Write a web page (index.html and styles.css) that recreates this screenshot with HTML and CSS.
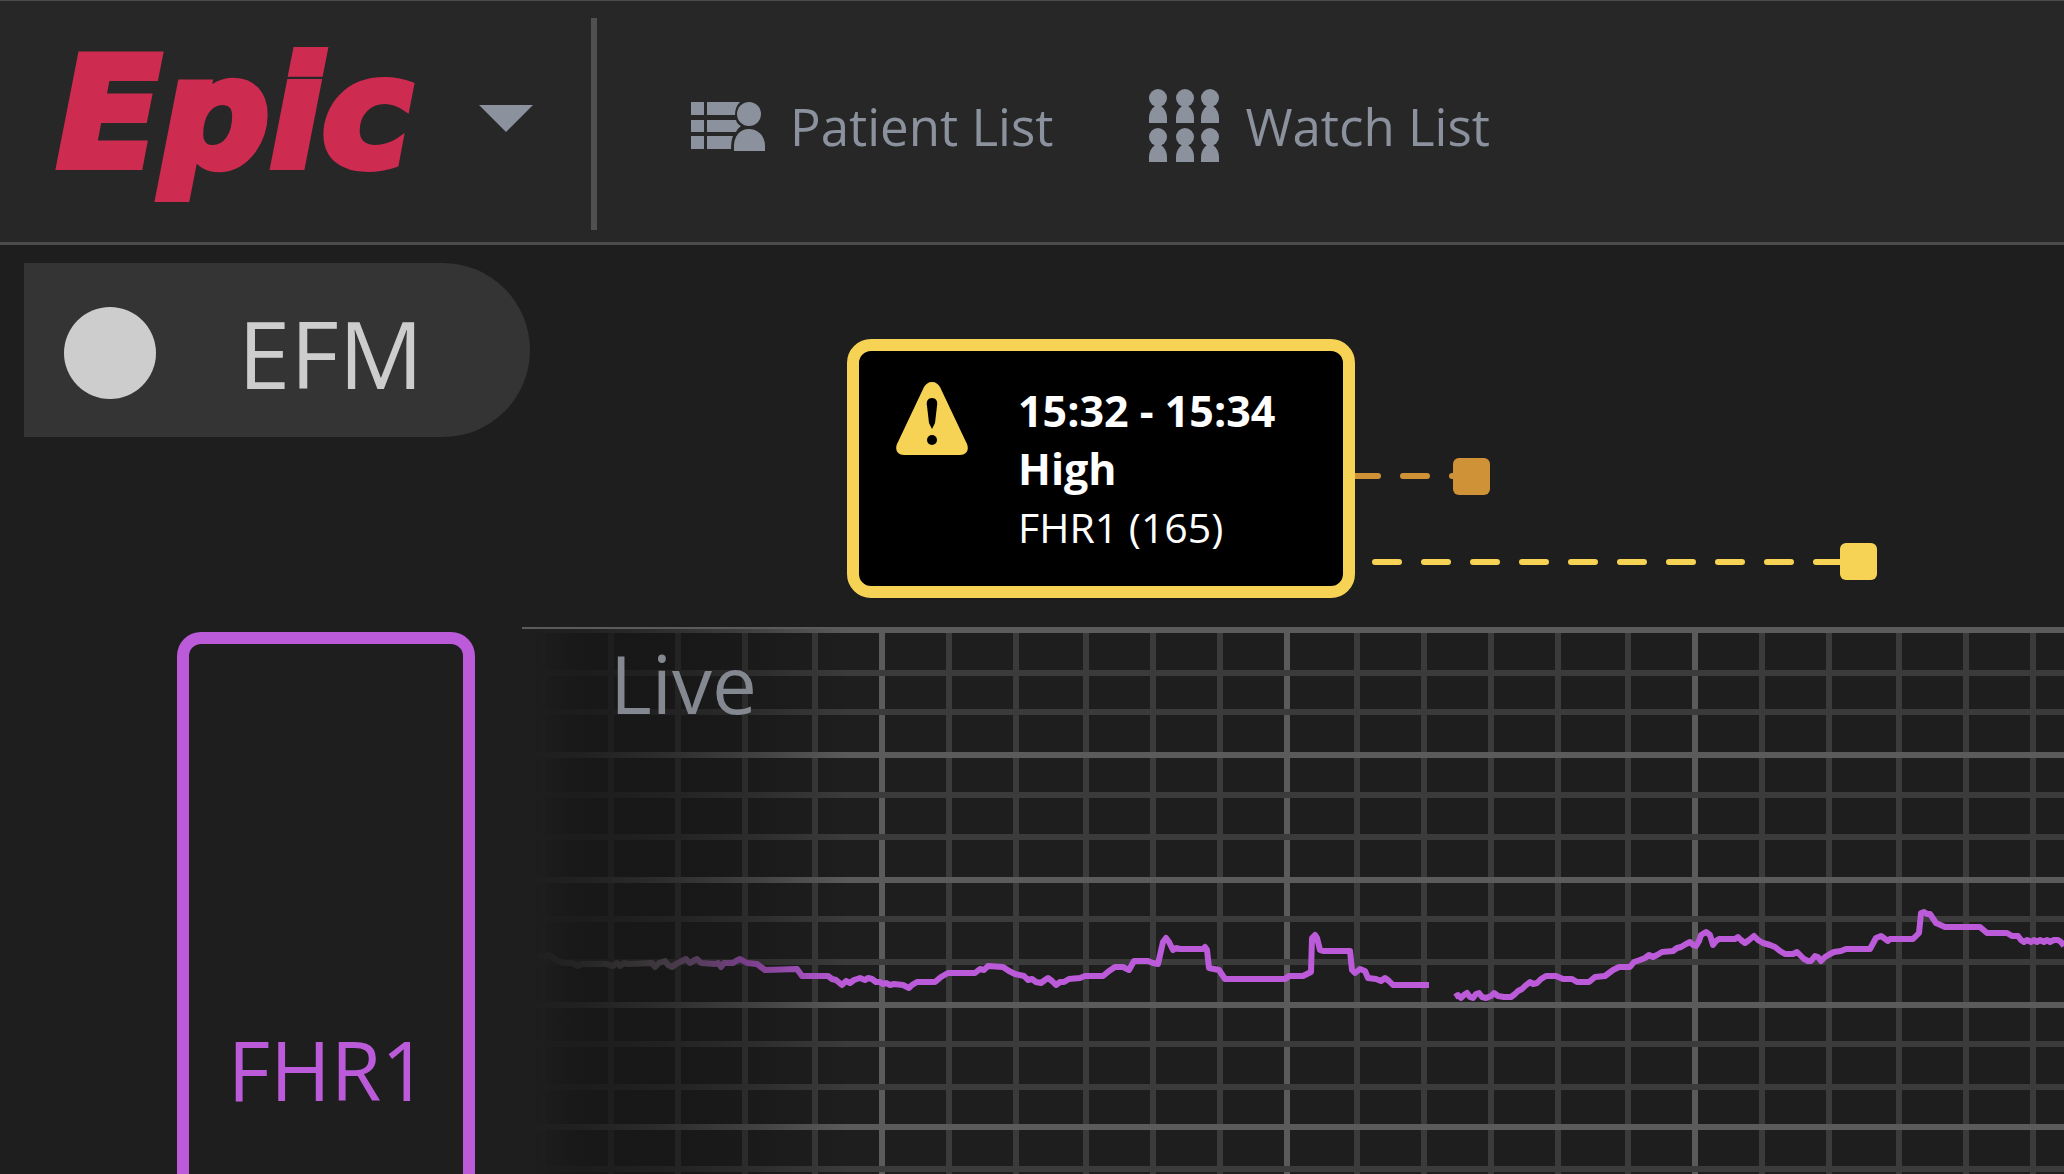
FILE: index.html
```html
<!DOCTYPE html>
<html lang="en">
	<head>
		<meta charset="utf-8" />
		<meta name="viewport" content="width=device-width, initial-scale=1">
		<title>EFM</title>
		<link rel="stylesheet" href="styles.css">
	</head>
	<body>

		<header class="navbar">
			<button class="brand" type="button">
				<svg class="logo" width="400" height="170" viewBox="0 0 400 170" role="img" aria-label="Epic">
					<text x="7" y="127">Epic</text>
				</svg>
				<svg class="caret" width="54" height="27" viewBox="0 0 54 27"><path d="M0 0h54L27 27z" /></svg>
			</button>
			<nav class="menu">
				<a class="menu-item" href="#">
					<svg class="menu-icon" width="74" height="78" viewBox="0 5 74 78">
						<path d="M0 20h13v13H0zM0 38h13v12H0zM0 54h13v13H0z" />
						<path d="M16 20h33q-5 5-5 13H16zM16 38h29q1 4 5 6-3 2-5 6H16zM16 54h26q-2 5-2 13H16z" />
						<ellipse cx="58" cy="32" rx="12" ry="12" />
						<path d="M43 69V64C43 54 49 47 58 47s16 7 16 17v5z" />
					</svg>
					<span>Patient List</span>
				</a>
				<a class="menu-item" href="#">
					<svg class="menu-icon" width="71" height="78" viewBox="0 0 71 78">
						<defs>
							<g id="person">
								<circle cx="9" cy="9" r="9" />
								<path d="M6 17h6c4 3 6 7 6 12v5H0v-5c0-5 2-9 6-12z" />
							</g>
						</defs>
						<use href="#person" x="0" y="2" />
						<use href="#person" x="27" y="2" />
						<use href="#person" x="52" y="2" />
						<use href="#person" x="0" y="41" />
						<use href="#person" x="27" y="41" />
						<use href="#person" x="52" y="41" />
					</svg>
					<span>Watch List</span>
				</a>
			</nav>
		</header>

		<main class="monitor">
			<div class="side">
				<button class="efm" type="button"><i class="efm-dot"></i>EFM</button>
			</div>

			<section class="events">
				<div class="alert">
					<svg class="alert-icon" width="74" height="74" viewBox="0 0 74 74">
						<path class="sign" d="M37 0c4 0 6 2 8 5l26 55c4 7 1 13-6 13H9c-7 0-10-6-6-13L29 5c2-3 4-5 8-5z" />
						<path d="M37 16c4 0 6 3 5 8l-2 17-3 6-3-6-2-17c-1-5 1-8 5-8z" />
						<circle cx="37" cy="58" r="5" />
					</svg>
					<div class="alert-text">
						<strong>15:32 - 15:34</strong>
						<strong>High</strong>
						<span>FHR1 (165)</span>
					</div>
				</div>
				<!-- event durations -->
				<svg class="tracks" width="600" height="259" viewBox="0 0 600 259">
					<path class="track orange" d="M-4 137h27M48 137h24M97 137h6" />
					<rect class="orange" x="98" y="119" width="37" height="37" rx="6" />
					<path class="track yellow" d="M20 223h468" stroke-dasharray="24 25" />
					<rect class="yellow" x="485" y="204" width="37" height="37" rx="6" />
				</svg>
			</section>

			<div class="side">
				<button class="channel" type="button">FHR1</button>
			</div>

			<section class="chart">
				<svg class="strip" width="1542" height="547" viewBox="522 627 1542 547">
					<defs>
						<linearGradient id="trace" gradientUnits="userSpaceOnUse" x1="522" y1="0" x2="800" y2="0">
							<stop offset="0" stop-color="#777" />
							<stop offset="0.45" stop-color="#8c8088" />
							<stop offset="0.8" stop-color="#bc5bd9" />
						</linearGradient>
					</defs>
					<path class="minor" d="M543 627v547M611 627v547M678 627v547M745 627v547M815 627v547M949 627v547M1016 627v547M1086 627v547M1153 627v547M1220 627v547M1357 627v547M1424 627v547M1491 627v547M1558 627v547M1628 627v547M1762 627v547M1829 627v547M1899 627v547M1966 627v547M2033 627v547" />
					<path class="major" d="M882 627v547M1287 627v547M1695 627v547" />
					<path class="minor" d="M522 673h1542M522 712h1542M522 795h1542M522 837h1542M522 919h1542M522 962h1542M522 1044h1542M522 1087h1542M522 1169h1542" />
					<path class="major" d="M522 630h1542M522 755h1542M522 880h1542M522 1005h1542M522 1127h1542" />

					<polyline class="fhr" points="537,954 544,957 548,955 552,957 556,960 563,963 572,963 578,966 582,964 590,964 606,964 613,966 617,963 620,966 624,963 628,964 652,963 655,967 659,963 665,961 668,965 672,967 676,964 682,961 686,959 690,963 693,961 697,959 701,963 715,964 718,963 721,967 724,963 733,963 736,961 740,959 747,963 757,964 765,970 797,969 802,976 828,976 832,979 836,980 842,985 846,981 850,983 854,980 860,978 865,980 868,978 872,979 876,982 880,982 883,984 886,983 890,985 894,984 903,985 909,988 912,985 917,982 935,982 941,977 948,973 975,973 980,969 984,970 988,966 1003,967 1009,971 1015,974 1024,976 1028,980 1032,979 1036,982 1041,983 1045,980 1048,978 1052,981 1056,985 1060,982 1064,982 1069,979 1080,978 1085,976 1103,976 1109,971 1115,967 1123,967 1129,970 1134,961 1148,961 1153,963 1158,964 1163,942 1166,938 1169,942 1173,950 1176,948 1180,949 1203,949 1205,947 1207,950 1209,968 1219,970 1225,979 1285,979 1289,976 1303,976 1311,972 1312,938 1315,935 1317,938 1320,950 1323,951 1350,951 1352,970 1355,973 1360,969 1365,971 1368,978 1376,979 1381,981 1385,978 1389,981 1393,985 1429,985" />
					<polyline class="fhr" points="1455,997 1458,995 1461,998 1464,995 1467,993 1470,997 1473,998 1476,994 1479,993 1482,997 1486,998 1491,996 1494,993 1498,996 1504,997 1511,997 1515,994 1518,991 1522,989 1525,986 1530,982 1533,984 1537,983 1541,979 1546,976 1556,976 1563,979 1572,979 1577,982 1589,982 1595,977 1605,976 1609,973 1613,970 1619,967 1630,967 1634,962 1640,960 1645,958 1649,955 1653,957 1657,955 1662,952 1673,951 1677,948 1681,947 1686,944 1690,942 1693,945 1696,946 1699,941 1701,935 1706,932 1710,935 1713,945 1716,941 1719,939 1735,939 1738,937 1741,940 1745,943 1749,940 1754,936 1758,940 1763,943 1770,945 1775,947 1780,951 1785,954 1793,954 1797,952 1801,956 1804,959 1808,961 1811,961 1815,956 1818,957 1821,961 1825,957 1830,954 1834,952 1841,951 1846,949 1870,949 1876,938 1881,936 1888,941 1890,939 1913,939 1919,933 1921,913 1924,912 1927,914 1930,914 1936,923 1945,927 1980,927 1987,933 2007,933 2012,936 2018,936 2021,940 2024,942 2027,940 2031,942 2034,940 2037,942 2040,940 2044,942 2047,940 2050,942 2054,940 2058,940 2061,942 2064,946" />
				</svg>
				<div class="fade"></div>
				<span class="live">Live</span>
			</section>
		</main>

	</body>
</html>
```

FILE: styles.css
```css
body {
	margin: 0;
	height: 100vh;
	display: flex;
	flex-direction: column;
	overflow: hidden;
	background-color: #1e1e1e;
	font-family: "Open Sans", "Noto Sans", sans-serif;
}

button {
	margin: 0;
	padding: 0;
	border: 0;
	background: none;
	font-family: inherit;
	cursor: pointer;
}

svg {
	display: block;
	flex: none;
}

/* top bar */
.navbar {
	box-sizing: border-box;
	height: 245px;
	flex: none;
	display: flex;
	align-items: center;
	border-top: 1px solid #4a4a4a;
	border-bottom: 3px solid #4d4b4e;
	background-color: #272727;
}

.brand {
	box-sizing: border-box;
	width: 597px;
	height: 212px;
	margin-top: 4px;
	padding-left: 50px;
	display: flex;
	align-items: center;
	border-right: 6px solid #505050;
}

.logo {
	overflow: visible;
	margin-right: 29px;
}

.logo text {
	font-family: "DejaVu Sans", sans-serif;
	font-size: 152px;
	font-weight: bold;
	font-style: italic;
	fill: #cd2b4f;
	stroke: #cd2b4f;
	stroke-width: 8px;
}

.caret {
	margin-bottom: 10px;
	fill: #8b929d;
}

.menu {
	display: flex;
	gap: 96px;
	padding: 8px 0 0 94px;
}

.menu-item {
	display: flex;
	align-items: center;
	gap: 25px;
	color: #8b929d;
	font-size: 51px;
	line-height: 78px;
	text-decoration: none;
	white-space: nowrap;
}

.menu-icon {
	fill: #8b929d;
}

/* monitor */
.monitor {
	flex: 1;
	min-height: 0;
	display: grid;
	grid-template-columns: 522px 1fr;
	grid-template-rows: 382px minmax(0, 1fr);
}

.side {
	display: flex;
	align-items: flex-start;
}

.efm {
	box-sizing: border-box;
	width: 506px;
	height: 174px;
	flex: none;
	margin: 18px 0 0 24px;
	padding: 6px 0 0 40px;
	display: flex;
	align-items: center;
	gap: 82px;
	border-radius: 0 87px 87px 0;
	background-color: #343434;
	color: #cdcdcd;
	font-size: 94px;
}

.efm-dot {
	width: 92px;
	height: 92px;
	border-radius: 50%;
	background-color: #cdcdcd;
}

.events {
	display: flex;
	padding: 94px 0 0 325px;
	overflow: hidden;
}

.alert {
	box-sizing: border-box;
	width: 508px;
	height: 259px;
	flex: none;
	display: flex;
	gap: 49px;
	padding: 31px 36px;
	border: 12px solid #f6d355;
	border-radius: 24px;
	background-color: #000;
	color: #fff;
	font-size: 43px;
	line-height: 58px;
}

.alert-icon .sign {
	fill: #f6d355;
}

.alert-text {
	display: flex;
	flex-direction: column;
	white-space: nowrap;
}

.alert-text span {
	font-size: 41px;
}

.orange {
	fill: #cf9236;
	stroke: #cf9236;
}

.yellow {
	fill: #f6d355;
	stroke: #f6d355;
}

.tracks rect {
	stroke: none;
}

.track {
	stroke-width: 6px;
	stroke-linecap: round;
}

/* runs off the bottom of the window */
.channel {
	box-sizing: border-box;
	width: 298px;
	height: calc(100% - 5px);
	margin: 5px 0 0 177px;
	padding: 369px 0 0 4px;
	display: flex;
	justify-content: center;
	border: 12px solid #bc5bd9;
	border-bottom: 0;
	border-radius: 24px 24px 0 0;
	color: #bc5bd9;
	font-size: 82px;
	line-height: 112px;
}

.chart {
	position: relative;
	overflow: hidden;
}

.minor,
.major,
.fhr {
	fill: none;
	stroke: #3b3b3b;
	stroke-width: 6px;
}

.major {
	stroke: #5b5b5b;
}

.fhr {
	stroke: url(#trace);
	stroke-linejoin: round;
}

/* dims the newest part of the strip */
.fade {
	position: absolute;
	top: 2px;
	bottom: 0;
	left: 0;
	width: 326px;
	background: linear-gradient(to right, #1e1e1e 6px, rgba(23, 23, 23, 0.86) 60px, rgba(20, 20, 20, 0.65) 140px, rgba(20, 20, 20, 0.4) 224px, rgba(20, 20, 20, 0) 326px);
}

.live {
	position: absolute;
	top: 0;
	left: 88px;
	color: #848991;
	font-size: 80px;
	line-height: 112px;
}
```
